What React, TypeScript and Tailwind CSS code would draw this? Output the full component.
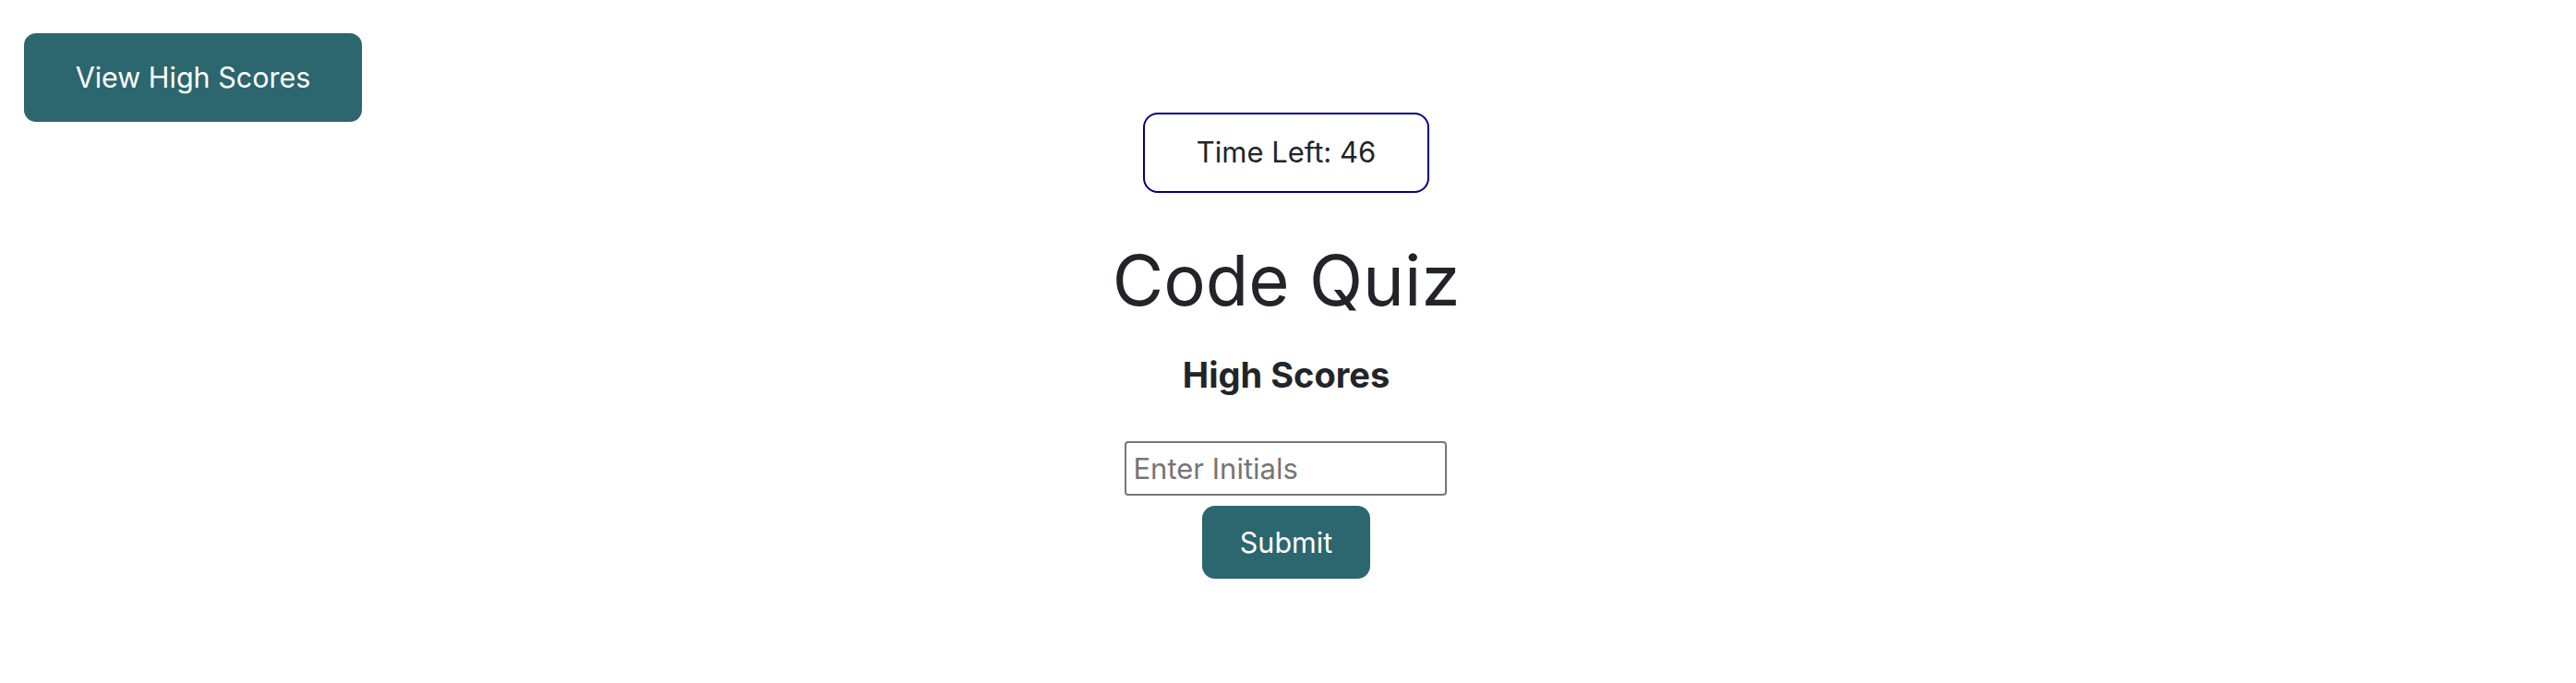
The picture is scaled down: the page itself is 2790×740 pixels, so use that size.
import React from "react";

export default function App() {
  return (
    <div
      className="w-[2790px] h-[740px] bg-white text-[#212529] grid grid-cols-[1fr_auto_1fr]"
      style={{ fontFamily: 'Inter, "Noto Sans", sans-serif' }}
    >
      <div className="flex items-start">
        <button className="ml-[26px] mt-[36px] w-[366px] h-[96px] rounded-[13px] bg-[#2c666e] text-white text-[30.5px]">
          View High Scores
        </button>
      </div>
      <div className="flex flex-col items-center pr-[4px]">
        <div className="mt-[122px] w-[310px] h-[87px] border-2 border-[#000080] rounded-[16px] flex items-center justify-center text-[31px]">
          Time Left: 46
        </div>
        <h1 className="mt-[48px] text-[76px] leading-[92px] font-normal">Code Quiz</h1>
        <h2 className="mt-[34px] text-[38px] leading-[46px] font-bold">High Scores</h2>
        <input
          placeholder="Enter Initials"
          className="mt-[49px] w-[349px] h-[59px] border-2 border-[#767676] rounded-[4px] px-[7px] text-[31px] placeholder:text-[#757575] outline-none"
        />
        <button className="mt-[11px] w-[182px] h-[79px] rounded-[14px] bg-[#2c666e] text-white text-[30.5px]">
          Submit
        </button>
      </div>
      <div />
    </div>
  );
}
